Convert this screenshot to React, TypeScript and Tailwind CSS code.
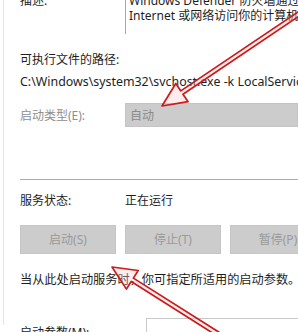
import React from "react";

const font = { fontFamily: '"Noto Sans", "Noto Sans CJK SC", sans-serif' };

function Arrow({ points }: { points: string }) {
  return (
    <polygon
      points={points}
      fill="rgba(255,200,200,0.35)"
      stroke="#cc1a1a"
      strokeWidth={1.7}
      strokeLinejoin="round"
    />
  );
}

export default function App() {
  return (
    <div
      className="relative w-[298px] h-[332px] overflow-hidden bg-white text-[12px] leading-[15px] text-[#1e1e1e]"
      style={font}
    >
      <div className="ml-[3px] h-full border-l border-[#e4e4e4] pl-[16px] -mt-[7px]">
        {/* description */}
        <div className="flex">
          <div className="w-[105px] shrink-0">描述:</div>
          <div className="h-[41px] flex-1 border-l border-[#a8a8a8] pl-[3px] whitespace-nowrap overflow-hidden">
            <div>Windows Defender 防火墙通过阻止未授权用户通过</div>
            <div>Internet 或网络访问你的计算机来帮助保护你的计算机。</div>
          </div>
        </div>
        <div className="mt-[18px]">可执行文件的路径:</div>
        <div className="mt-[7px] whitespace-nowrap text-[12.4px]">C:\Windows\system32\svchost.exe -k LocalServiceNoNetwork</div>
        {/* startup type */}
        <div className="mt-[14px] flex items-center">
          <div className="w-[105px] shrink-0 text-[#8e8e8e]">启动类型(E):</div>
          <div className="h-[24px] flex-1 bg-[#cccccc] border border-[#c4c4c4] flex items-center pl-[4px] text-[#8a8a8a]">
            自动
          </div>
        </div>
        <div className="mt-[52px] h-px bg-[#acacac]" />
        <div className="mt-[13px] flex">
          <div className="w-[105px] shrink-0">服务状态:</div>
          <div>正在运行</div>
        </div>
        <div className="mt-[17px] flex gap-[9px] whitespace-nowrap">
          <div className="h-[29px] w-[96px] shrink-0 bg-[#cccccc] border border-[#c6c6c6] flex items-center justify-center text-[#9a9a9a]">
            启动(S)
          </div>
          <div className="h-[29px] w-[96px] shrink-0 bg-[#cccccc] border border-[#c6c6c6] flex items-center justify-center text-[#9a9a9a]">
            停止(T)
          </div>
          <div className="h-[29px] w-[96px] shrink-0 bg-[#cccccc] border border-[#c6c6c6] flex items-center justify-center text-[#9a9a9a]">
            暂停(P)
          </div>
        </div>
        <div className="mt-[18px] whitespace-nowrap text-[12.2px]">当从此处启动服务时，你可指定所适用的启动参数。</div>
        <div className="mt-[31px] flex">
          <div className="w-[126px] shrink-0 pt-[7px]">启动参数(M):</div>
          <div className="h-[24px] flex-1 border border-[#c8c8c8] border-r-0" />
        </div>
      </div>
      <svg className="absolute inset-0 pointer-events-none" width={298} height={332}>
        <Arrow points="298.9,11.3 180.8,90.9 175.8,83.5 162,106 188.1,101.7 183,94.3 301.1,14.7" />
        <Arrow points="219.1,332.3 133.4,278.1 138.2,270.5 112,267 126.4,289.1 131.2,281.5 216.9,335.7" />
      </svg>
    </div>
  );
}
